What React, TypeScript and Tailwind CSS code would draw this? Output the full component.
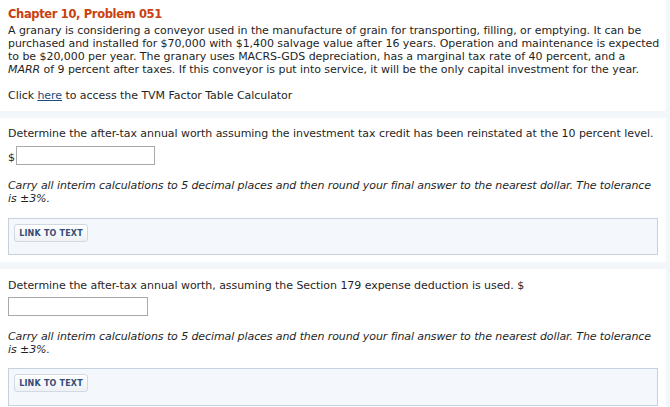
export default function App() {
  const font = { fontFamily: '"DejaVu Sans", Verdana, sans-serif' };
  return (
    <div className="flex w-[670px] h-[407px] overflow-hidden bg-[#f4f7fa] text-[11px] leading-[13px] tracking-[-0.05px] text-[#1f1f1f]" style={font}>
      <div className="flex w-[666px] flex-col gap-[7px]">
        {/* problem statement */}
        <div className="h-[111px] bg-white px-[8px] pt-[6px]">
          <h2 className="text-[11.5px] font-bold leading-[16px] tracking-[-0.35px] text-[#c9410f]">Chapter 10, Problem 051</h2>
          <p className="mt-[2px] whitespace-nowrap">
            A granary is considering a conveyor used in the manufacture of grain for transporting, filling, or emptying. It can be
            <br />
            purchased and installed for $70,000 with $1,400 salvage value after 16 years. Operation and maintenance is expected
            <br />
            to be $20,000 per year. The granary uses MACRS-GDS depreciation, has a marginal tax rate of 40 percent, and a
            <br />
            <i>MARR</i> of 9 percent after taxes. If this conveyor is put into service, it will be the only capital investment for the year.
          </p>
          <p className="mt-[13px]">
            Click <a className="text-[#1b4c7e] underline">here</a> to access the TVM Factor Table Calculator
          </p>
        </div>

        {/* question 1 */}
        <div className="h-[144px] bg-white px-[8px] pt-[9px]">
          <p className="whitespace-nowrap">Determine the after-tax annual worth assuming the investment tax credit has been reinstated at the 10 percent level.</p>
          <div className="mt-[6px] flex items-end gap-[1px]">
            <span className="leading-[14px]">$</span>
            <div className="h-[19px] w-[139px] border border-[#a9a9a9] bg-white" />
          </div>
          <p className="mt-[14px] whitespace-nowrap italic tracking-[-0.09px]">
            Carry all interim calculations to 5 decimal places and then round your final answer to the nearest dollar. The tolerance
            <br />
            is ±3%.
          </p>
          <div className="mt-[13px] h-[37px] w-[650px] border border-[#c7d0dd] bg-[#f4f7fb] px-[5px] pt-[5px]">
            <LinkButton />
          </div>
        </div>

        {/* question 2 */}
        <div className="flex-1 bg-white px-[8px] pt-[10px]">
          <p className="whitespace-nowrap">Determine the after-tax annual worth, assuming the Section 179 expense deduction is used. $</p>
          <div className="mt-[5px] h-[19px] w-[140px] border border-[#a9a9a9] bg-white" />
          <p className="mt-[14px] whitespace-nowrap italic tracking-[-0.09px]">
            Carry all interim calculations to 5 decimal places and then round your final answer to the nearest dollar. The tolerance
            <br />
            is ±3%.
          </p>
          <div className="mt-[12px] h-[38px] w-[650px] border border-[#c7d0dd] bg-[#f4f7fb] px-[5px] pt-[5px]">
            <LinkButton />
          </div>
        </div>
      </div>
    </div>
  );
}

function LinkButton() {
  return (
    <div className="inline-flex h-[18px] w-[74px] items-center justify-center rounded-[3px] border border-[#d3d9e2] bg-gradient-to-b from-white to-[#eef1f5] text-[8px] font-bold tracking-[0.2px] text-[#344d77]">
      LINK TO TEXT
    </div>
  );
}
